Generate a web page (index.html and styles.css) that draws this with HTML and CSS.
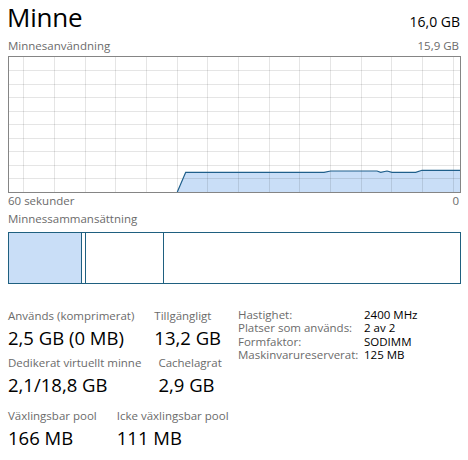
FILE: index.html
```html
<!DOCTYPE html>
<html lang="sv">
<head>
<meta charset="utf-8">
<title>Minne</title>
<link rel="stylesheet" href="styles.css">
</head>
<body>
<div class="page">
  <div class="header">
    <span class="title">Minne</span>
    <span class="total">16,0 GB</span>
  </div>
  <div class="labelrow top-label">
    <span>Minnesanvändning</span>
    <span>15,9 GB</span>
  </div>
  <div class="graph">
    <svg class="chart" viewBox="0 0 451 135" width="451" height="135">
      <polygon class="area" points="168.3,135 176.7,115.3 315,115.3 321.7,114 368,114 371.7,115.3 378,114 383,115.3 406.7,115.3 413,113.3 451,113.3 451,135"/>
      <g class="grid">
        <line x1="14.5" y1="0" x2="14.5" y2="135"/>
        <line x1="45.5" y1="0" x2="45.5" y2="135"/>
        <line x1="76.5" y1="0" x2="76.5" y2="135"/>
        <line x1="106.5" y1="0" x2="106.5" y2="135"/>
        <line x1="137.5" y1="0" x2="137.5" y2="135"/>
        <line x1="168.5" y1="0" x2="168.5" y2="135"/>
        <line x1="198.5" y1="0" x2="198.5" y2="135"/>
        <line x1="229.5" y1="0" x2="229.5" y2="135"/>
        <line x1="260.5" y1="0" x2="260.5" y2="135"/>
        <line x1="290.5" y1="0" x2="290.5" y2="135"/>
        <line x1="321.5" y1="0" x2="321.5" y2="135"/>
        <line x1="352.5" y1="0" x2="352.5" y2="135"/>
        <line x1="382.5" y1="0" x2="382.5" y2="135"/>
        <line x1="413.5" y1="0" x2="413.5" y2="135"/>
        <line x1="444.5" y1="0" x2="444.5" y2="135"/>
        <line x1="0" y1="13.5" x2="451" y2="13.5"/>
        <line x1="0" y1="27.5" x2="451" y2="27.5"/>
        <line x1="0" y1="40.5" x2="451" y2="40.5"/>
        <line x1="0" y1="54.5" x2="451" y2="54.5"/>
        <line x1="0" y1="67.5" x2="451" y2="67.5"/>
        <line x1="0" y1="81.5" x2="451" y2="81.5"/>
        <line x1="0" y1="94.5" x2="451" y2="94.5"/>
        <line x1="0" y1="108.5" x2="451" y2="108.5"/>
        <line x1="0" y1="121.5" x2="451" y2="121.5"/>
      </g>
      <polyline class="line" points="168.3,135 176.7,115.3 315,115.3 321.7,114 368,114 371.7,115.3 378,114 383,115.3 406.7,115.3 413,113.3 451,113.3"/>
    </svg>
  </div>
  <div class="labelrow axis">
    <span>60 sekunder</span>
    <span>0</span>
  </div>
  <div class="label comp-label">Minnessammansättning</div>
  <div class="comp">
    <div class="seg inuse"></div>
    <div class="seg modified"></div>
    <div class="seg standby"></div>
    <div class="seg free"></div>
  </div>
  <div class="stats">
    <div class="left">
      <div class="row row1">
        <div class="item"><div class="lbl">Används (komprimerat)</div><div class="val">2,5 GB (0 MB)</div></div>
        <div class="item"><div class="lbl">Tillgängligt</div><div class="val">13,2 GB</div></div>
      </div>
      <div class="row row2">
        <div class="item"><div class="lbl">Dedikerat virtuellt minne</div><div class="val">2,1/18,8 GB</div></div>
        <div class="item"><div class="lbl">Cachelagrat</div><div class="val">2,9 GB</div></div>
      </div>
      <div class="row row3">
        <div class="item"><div class="lbl">Växlingsbar pool</div><div class="val">166 MB</div></div>
        <div class="item"><div class="lbl">Icke växlingsbar pool</div><div class="val">111 MB</div></div>
      </div>
    </div>
    <div class="info">
      <span class="k">Hastighet:</span><span class="v">2400 MHz</span>
      <span class="k">Platser som används:</span><span class="v">2 av 2</span>
      <span class="k">Formfaktor:</span><span class="v">SODIMM</span>
      <span class="k">Maskinvarureserverat:</span><span class="v">125 MB</span>
    </div>
  </div>
</div>
</body>
</html>
```
FILE: styles.css
```css
html, body {
  margin: 0;
  padding: 0;
  background: #ffffff;
}
body {
  font-family: "Open Sans", "Noto Sans", sans-serif;
  color: #000000;
  width: 468px;
  height: 460px;
  overflow: hidden;
}
.page {
  padding: 0 7px 0 8px;
}
.header {
  display: flex;
  justify-content: space-between;
  align-items: baseline;
  height: 35px;
}
.title {
  font-size: 26px;
  line-height: 35px;
  margin-left: -1px;
  letter-spacing: -0.2px;
}
.total {
  font-size: 14px;
  line-height: 35px;
  margin-right: 1px;
}
.labelrow {
  display: flex;
  justify-content: space-between;
  font-size: 11.5px;
  color: #6b6b6b;
}
.top-label {
  line-height: 21px;
}
.top-label span:last-child {
  margin-right: 2px;
}
.graph {
  border: 1px solid #858585;
  width: 451px;
  height: 135px;
}
.chart {
  display: block;
}
.area {
  fill: #c9def7;
}
.grid line {
  stroke: #000000;
  stroke-opacity: 0.1;
  stroke-width: 1;
  shape-rendering: crispEdges;
}
.line {
  fill: none;
  stroke: #1f5f8b;
  stroke-width: 1.2;
}
.axis {
  line-height: 16px;
}
.axis span:last-child {
  margin-right: 2px;
}
.label {
  font-size: 11.5px;
  color: #6b6b6b;
}
.comp-label {
  line-height: 20px;
}
.comp {
  margin-top: 3px;
  display: flex;
  border: 1px solid #1f6080;
  width: 451px;
  height: 50px;
}
.seg {
  height: 100%;
}
.inuse {
  width: 72px;
  background: #c9def7;
  border-right: 1px solid #1f6080;
}
.modified {
  width: 3px;
  border-right: 1px solid #1f6080;
}
.standby {
  width: 77px;
  border-right: 1px solid #1f6080;
}
.free {
  flex: 1;
}
.stats {
  margin-top: 24px;
  display: flex;
}
.left {
  width: 230px;
}
.row {
  display: flex;
  gap: 20px;
}
.row2 {
  margin-top: 2.5px;
  gap: 17px;
}
.row3 {
  margin-top: 8.5px;
}
.lbl {
  font-size: 11.5px;
  line-height: 16px;
  color: #6b6b6b;
  white-space: nowrap;
}
.val {
  font-size: 18.5px;
  line-height: 28.5px;
  white-space: nowrap;
}
.info {
  margin-top: 0;
  display: grid;
  grid-template-columns: 126px auto;
  font-size: 11.5px;
  line-height: 13.4px;
  align-content: start;
}
.k {
  color: #6b6b6b;
  white-space: nowrap;
}
.v {
  color: #000000;
  white-space: nowrap;
}
```
